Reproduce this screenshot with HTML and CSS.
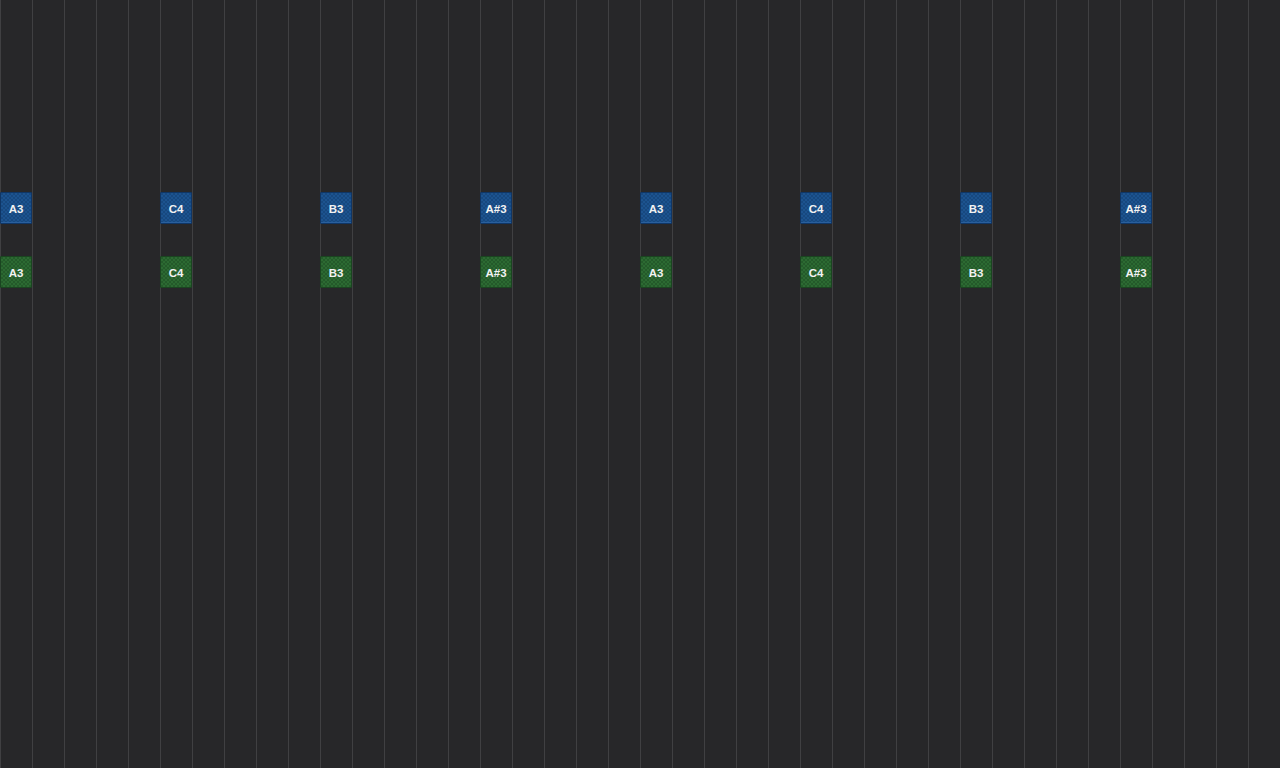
FILE: index.html
```html
<!doctype html>
<html>
	<head>
		<meta charset="utf-8" />
		<title>Piano roll</title>
		<link rel="stylesheet" href="styles.css">
	</head>
	<body>
		<main class="roll">
			<div class="note lead" style="grid-column: 1; grid-row: 7">A3</div>
			<div class="note lead" style="grid-column: 6; grid-row: 7">C4</div>
			<div class="note lead" style="grid-column: 11; grid-row: 7">B3</div>
			<div class="note lead" style="grid-column: 16; grid-row: 7">A#3</div>
			<div class="note lead" style="grid-column: 21; grid-row: 7">A3</div>
			<div class="note lead" style="grid-column: 26; grid-row: 7">C4</div>
			<div class="note lead" style="grid-column: 31; grid-row: 7">B3</div>
			<div class="note lead" style="grid-column: 36; grid-row: 7">A#3</div>

			<div class="note bass" style="grid-column: 1; grid-row: 9">A3</div>
			<div class="note bass" style="grid-column: 6; grid-row: 9">C4</div>
			<div class="note bass" style="grid-column: 11; grid-row: 9">B3</div>
			<div class="note bass" style="grid-column: 16; grid-row: 9">A#3</div>
			<div class="note bass" style="grid-column: 21; grid-row: 9">A3</div>
			<div class="note bass" style="grid-column: 26; grid-row: 9">C4</div>
			<div class="note bass" style="grid-column: 31; grid-row: 9">B3</div>
			<div class="note bass" style="grid-column: 36; grid-row: 9">A#3</div>
		</main>
	</body>
</html>
```

FILE: styles.css
```css
html, body {
	margin: 0;
	height: 100%;
	overflow: hidden;
	background: #272729;
	font-family: "Liberation Sans", Arial, sans-serif;
}

.roll {
	display: grid;
	grid-template-columns: repeat(40, 32px);
	grid-template-rows: repeat(24, 32px);
	width: 1280px;
	height: 768px;
	background-color: #272729;
	background-image: repeating-linear-gradient(to right, #404042 0 1px, transparent 1px 32px);
}

.note {
	box-sizing: border-box;
	display: flex;
	align-items: center;
	justify-content: center;
	padding-top: 2px;
	color: #f2f2f2;
	font-size: 11.5px;
	font-weight: bold;
	border: 1px solid;
	border-radius: 1px;
	background-size: 4px 4px;
}

.lead {
	background-color: #17487f;
	border-color: #0f3666;
	background-image: repeating-conic-gradient(#1c538f 0 25%, #17487f 0 50%);
	box-shadow: inset 0 -3px 0 -2px #2a5f9c;
}

.bass {
	background-color: #245a2a;
	border-color: #1a4520;
	background-image: repeating-conic-gradient(#2c6a32 0 25%, #245a2a 0 50%);
}
```
